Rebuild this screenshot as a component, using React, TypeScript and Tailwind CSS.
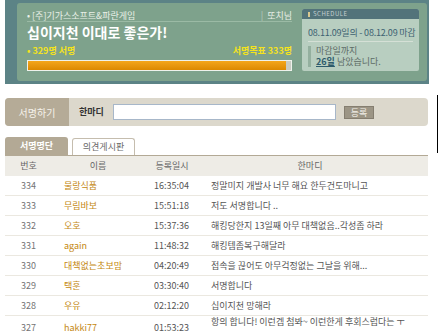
import React from "react"

interface Signature {
  no: number
  name: string
  time: string
  comment: string
}

const signatures: Signature[] = [
  { no: 334, name: "물랑식품", time: "16:35:04", comment: "정말미지 개발사 너무 해요 한두건도마니고" },
  { no: 333, name: "무림바보", time: "15:51:18", comment: "저도 서명합니다 .." },
  { no: 332, name: "오호", time: "15:37:36", comment: "해킹당한지 13일째 아무 대책없음..각성좀 하라" },
  { no: 331, name: "again", time: "11:48:32", comment: "해킹템좀복구해달라" },
  { no: 330, name: "대책없는초보맘", time: "04:20:49", comment: "접속을 끊어도 아무걱정없는 그날을 위해..." },
  { no: 329, name: "택훈", time: "03:30:40", comment: "서명합니다" },
  { no: 328, name: "우유", time: "02:12:20", comment: "십이지천 망해라" },
  { no: 327, name: "hakki77", time: "01:53:23", comment: "항의 합니다! 이런겜 첨봐~ 이런한게 후회스럽다는 ㅜ" },
]

function CampaignPanel() {
  return (
    <div className="h-[84px] w-[424px] bg-[#5c8386] pb-[3px] pl-[12px] pr-[2px] pt-[3px]">
      <div className="flex h-full rounded-[3px] bg-[#7ea28c] pl-[10px] pr-[8px] pt-[6px]">
        <div className="w-[265px]">
          <div className="flex h-[13px] items-center justify-between border-b border-[#9bbaa5] text-[9px] leading-none text-[#e9f0e8]">
            <span>• [주]기가스소프트&amp;파란게임</span>
            <span>
              <span className="mr-[4px] text-[#b9cdbf]">|</span>또치님
            </span>
          </div>
          <h1 className="mt-[2px] text-[14px] font-bold leading-[16px] text-white">십이지천 이대로 좋은가!</h1>
          <div className="mt-[5px] flex justify-between text-[9px] font-bold leading-[12px] text-[#f5e31c]">
            <span>• 329명 서명</span>
            <span>서명목표 333명</span>
          </div>
          <div className="mt-[3px] flex h-[11px] border border-[#eef2ec] bg-[#c9ccc4]">
            <div className="h-full w-[98%] bg-gradient-to-b from-[#f4a61a] to-[#dc8900]" />
          </div>
        </div>

        <div className="ml-[10px] flex h-[62px] w-[117px] flex-col overflow-hidden rounded-[2px] bg-[#b8cec0]">
          <div className="flex h-[10px] shrink-0 items-center gap-[3px] bg-[#52737a] pl-[6px] text-[6px] leading-none tracking-[0.5px] text-[#c3d0d0]">
            <span className="h-[5px] w-[2px] bg-[#d8c890]" />
            SCHEDULE
          </div>
          <div className="px-[6px]">
            <div className="mt-[8px] h-[12px] whitespace-nowrap text-[9px] leading-[12px] tracking-[-0.2px] text-[#3e6272]">
              08.11.09일의 - 08.12.09 마감
            </div>
            <div className="mt-[2px] border-t border-[#d5e0d6]" />
            <div className="mt-[4px] flex h-[21px] flex-col justify-between border-l-[3px] border-[#94b09f] pl-[5px] text-[9px] leading-[10px] text-[#5d6b66]">
              <div className="h-[10px]">마감일까지</div>
              <div className="h-[10px] whitespace-nowrap">
                <span className="font-bold text-[#2e5b6b] underline">26일</span> 남았습니다.
              </div>
            </div>
          </div>
        </div>
      </div>
    </div>
  )
}

function SignBar() {
  return (
    <div className="mt-[14px] flex h-[28px] items-center overflow-hidden rounded-[4px] bg-[#dcd8cc]">
      <div className="flex h-full w-[64px] items-center justify-center bg-[#b5ab97] text-[10px] text-[#f6f2ea]">
        서명하기
      </div>
      <span className="ml-[10px] w-[34px] text-[9px] font-bold text-[#333]">한마디</span>
      <input className="h-[16px] w-[223px] border border-[#a7b7c9] bg-white outline-none" />
      <button
        type="button"
        className="ml-[8px] h-[13px] w-[30px] border border-[#857e70] bg-[#9c9585] text-[9px] leading-none text-[#f3f0ea]"
      >
        등록
      </button>
    </div>
  )
}

function Tabs() {
  return (
    <div className="mt-[11px] flex items-end gap-[4px]">
      <div className="flex h-[18px] w-[63px] items-center justify-center rounded-t-[3px] bg-[#b3a995] text-[9px] font-bold text-white">
        서명명단
      </div>
      <div className="flex h-[17px] w-[63px] items-center justify-center rounded-t-[3px] border border-b-0 border-[#c5bdae] bg-white text-[9px] text-[#6a6a6a]">
        의견게시판
      </div>
    </div>
  )
}

function SignatureTable() {
  return (
    <div className="border-t border-[#b3a995]">
      <div className="grid h-[20px] grid-cols-[47px_92px_56px_228px] items-center bg-[#eeece6] text-center text-[9px] text-[#666]">
        <span>번호</span>
        <span>이름</span>
        <span>등록일시</span>
        <span className="pr-[8px]">한마디</span>
      </div>
      {signatures.map((s, i) => {
        const last = i === signatures.length - 1
        return (
          <div
            key={s.no}
            className={`grid grid-cols-[47px_92px_56px_228px] border-b border-[#ebe8e0] text-[9px] ${
              last ? "h-[24px]" : "h-[20px] items-center"
            }`}
          >
            <span className="self-center text-center text-[#747474]">{s.no}</span>
            <span className="self-center pl-[12px] text-[#c4870f]">{s.name}</span>
            <span className="self-center pl-[10px] text-[#555]">{s.time}</span>
            <span className={`whitespace-nowrap pl-[11px] text-[#555] ${last ? "pt-[1px] leading-[10px]" : ""}`}>
              {s.comment}
            </span>
          </div>
        )
      })}
    </div>
  )
}

export default function App() {
  return (
    <div className="relative h-[331px] w-[439px] overflow-hidden bg-white pl-[5px] font-['Noto_Sans_CJK_KR','Liberation_Sans',sans-serif]">
      <div className="w-[424px]">
        <CampaignPanel />
        <div className="w-[423px]">
          <SignBar />
          <Tabs />
          <SignatureTable />
        </div>
      </div>
      <div className="absolute right-[1px] top-[95px] h-[58px] w-px bg-black" />
    </div>
  )
}
